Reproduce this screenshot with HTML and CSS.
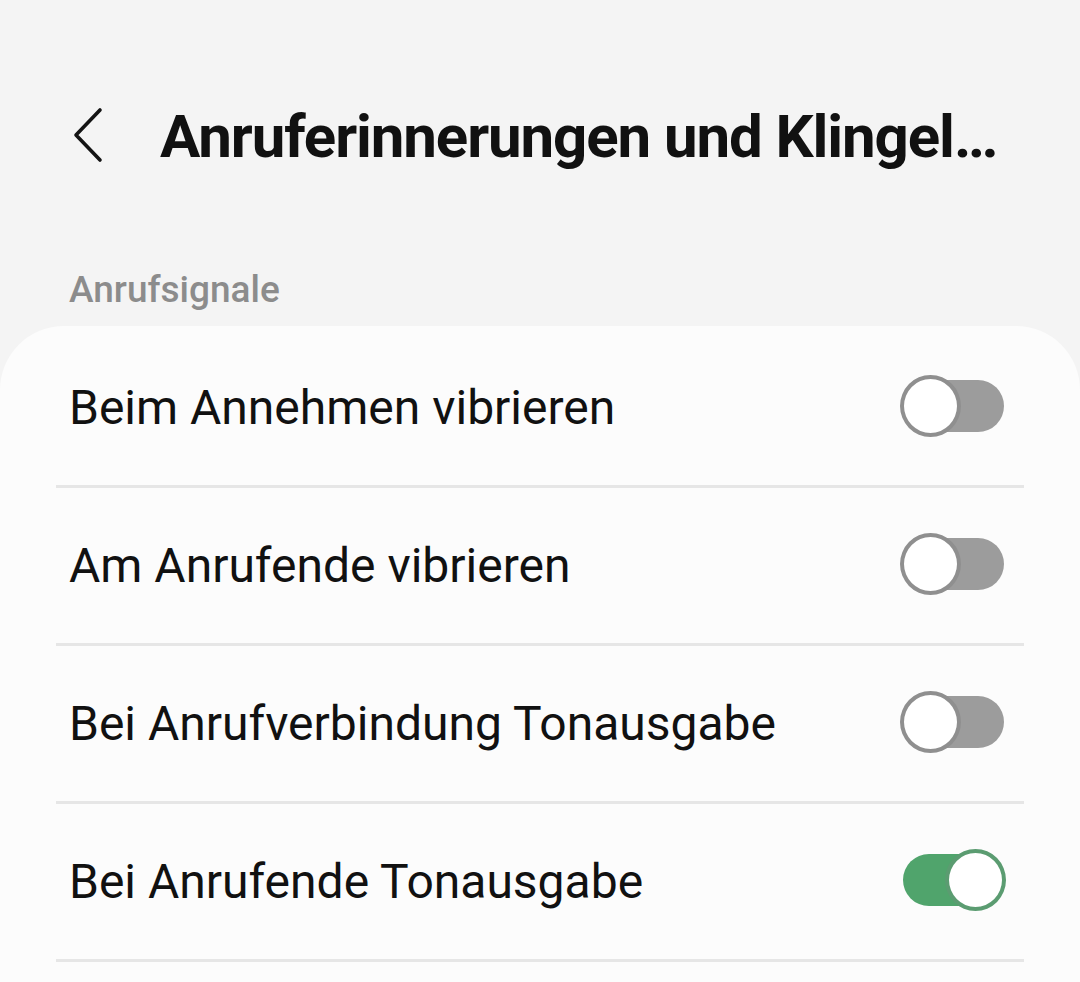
FILE: index.html
```html
<!DOCTYPE html>
<html lang="de">
<head>
<meta charset="utf-8">
<title>Anruferinnerungen und Klingeltöne</title>
<link rel="stylesheet" href="styles.css">
</head>
<body>
<div class="screen">
  <header class="appbar">
    <button class="back" aria-label="Zurück">
      <svg width="34" height="56" viewBox="0 0 34 56"><polyline points="27,3 3,28 27,53" fill="none" stroke="#141414" stroke-width="3.6" stroke-linecap="round" stroke-linejoin="round"/></svg>
    </button>
    <h1 class="title">Anruferinnerungen und Klingeltöne</h1>
  </header>
  <div class="section-label">Anrufsignale</div>
  <section class="card">
    <div class="row">
      <span class="label">Beim Annehmen vibrieren</span>
      <span class="switch"><span class="knob"></span></span>
    </div>
    <div class="row">
      <span class="label">Am Anrufende vibrieren</span>
      <span class="switch"><span class="knob"></span></span>
    </div>
    <div class="row">
      <span class="label">Bei Anrufverbindung Tonausgabe</span>
      <span class="switch"><span class="knob"></span></span>
    </div>
    <div class="row">
      <span class="label">Bei Anrufende Tonausgabe</span>
      <span class="switch on"><span class="knob"></span></span>
    </div>
    <div class="row"></div>
  </section>
</div>
</body>
</html>
```

FILE: styles.css
```css
html, body {
  margin: 0;
  padding: 0;
  background: #f4f4f4;
  font-family: Roboto, "Noto Sans", sans-serif;
  overflow: hidden;
}

.screen {
  width: 1080px;
  height: 982px;
  overflow: hidden;
}

.appbar {
  display: flex;
  align-items: center;
  padding-top: 102px;
  height: 70px;
}

.back {
  border: 0;
  background: none;
  padding: 0;
  margin-left: 73px;
  width: 34px;
  height: 56px;
  margin-top: -4px;
  display: flex;
}

.title {
  margin: 0 0 0 53px;
  width: 846px;
  font-size: 60px;
  line-height: 70px;
  font-weight: 700;
  color: #111;
  white-space: nowrap;
  overflow: hidden;
  text-overflow: ellipsis;
  letter-spacing: -1.1px;
}

.section-label {
  margin-top: 96px;
  padding-left: 69px;
  font-size: 37px;
  line-height: 44px;
  font-weight: 500;
  color: #8c8c8c;
}

.card {
  margin-top: 14px;
  background: #fcfcfc;
  border-radius: 64px 64px 0 0;
  padding: 4px 56px 0;
}

.row {
  display: flex;
  align-items: center;
  justify-content: space-between;
  height: 155px;
  border-bottom: 3px solid #e6e6e6;
  padding: 0 20px 0 13px;
}

.label {
  font-size: 48px;
  color: #111;
}

.switch {
  position: relative;
  width: 101px;
  height: 52px;
  border-radius: 26px;
  background: #9c9c9c;
  margin-top: -4px;
}

.knob {
  position: absolute;
  left: -3px;
  top: -5px;
  width: 53px;
  height: 54px;
  border: 4px solid #8f8f8f;
  border-radius: 50%;
  background: #fff;
}

.switch.on {
  background: #50a46c;
}

.switch.on .knob {
  left: 42px;
  border-color: #5b9c71;
}
```
